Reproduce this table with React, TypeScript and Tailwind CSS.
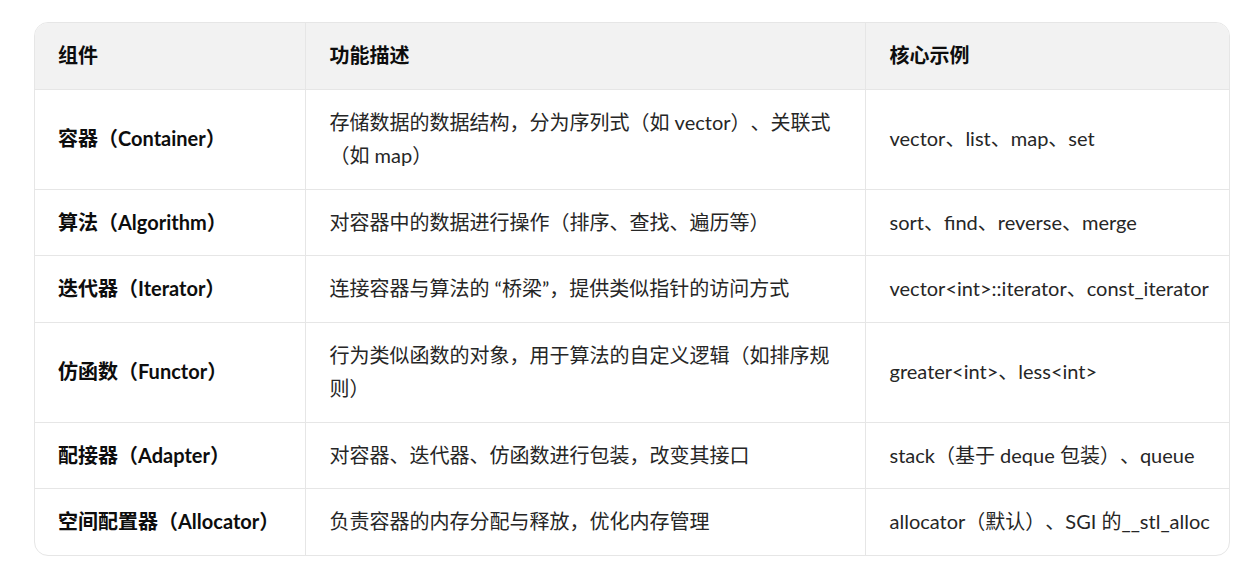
import React from "react";

const rows = [
  {
    name: "容器（Container）",
    desc: "存储数据的数据结构，分为序列式（如 vector）、关联式（如 map）",
    example: "vector、list、map、set",
  },
  {
    name: "算法（Algorithm）",
    desc: "对容器中的数据进行操作（排序、查找、遍历等）",
    example: "sort、find、reverse、merge",
  },
  {
    name: "迭代器（Iterator）",
    desc: "连接容器与算法的 “桥梁”，提供类似指针的访问方式",
    example: "vector<int>::iterator、const_iterator",
  },
  {
    name: "仿函数（Functor）",
    desc: "行为类似函数的对象，用于算法的自定义逻辑（如排序规则）",
    example: "greater<int>、less<int>",
  },
  {
    name: "配接器（Adapter）",
    desc: "对容器、迭代器、仿函数进行包装，改变其接口",
    example: "stack（基于 deque 包装）、queue",
  },
  {
    name: "空间配置器（Allocator）",
    desc: "负责容器的内存分配与释放，优化内存管理",
    example: "allocator（默认）、SGI 的__stl_alloc",
  },
];

function App() {
  return (
    <div className="min-h-[571px] bg-white pl-[34px] pt-[22px] font-['Lato','Noto_Sans_CJK_SC',sans-serif] text-[20px] leading-[33.5px] text-[#262626] [text-spacing-trim:space-all]">
      <div className="w-[1196px] overflow-hidden rounded-[14px] border border-[#e6e6e6]">
        <table className="w-full table-fixed border-collapse">
          <colgroup>
            <col className="w-[270px]" />
            <col className="w-[560px]" />
            <col />
          </colgroup>
          <thead>
            <tr className="bg-[#f2f2f2] text-left">
              <th className="border-r border-b border-[#e6e6e6] py-4 pl-[23px] pr-6 font-bold text-[#0d0d0d]">组件</th>
              <th className="border-r border-b border-[#e6e6e6] px-6 py-4 font-bold text-[#0d0d0d]">功能描述</th>
              <th className="border-b border-[#e6e6e6] px-6 py-4 font-bold text-[#0d0d0d]">核心示例</th>
            </tr>
          </thead>
          <tbody>
            {rows.map((r, i) => {
              const last = i === rows.length - 1;
              return (
                <tr key={r.name} className="align-middle">
                  <td className={"whitespace-nowrap border-r border-[#e6e6e6] py-4 pl-[23px] pr-2 font-bold text-[#0d0d0d] " + (last ? "" : "border-b")}>
                    {r.name}
                  </td>
                  <td className={"border-r border-[#e6e6e6] px-6 py-4 " + (last ? "" : "border-b")}>{r.desc}</td>
                  <td className={"whitespace-nowrap border-[#e6e6e6] py-4 pl-6 pr-2 " + (last ? "" : "border-b")}>
                    {r.example}
                  </td>
                </tr>
              );
            })}
          </tbody>
        </table>
      </div>
    </div>
  );
}

export default App;
